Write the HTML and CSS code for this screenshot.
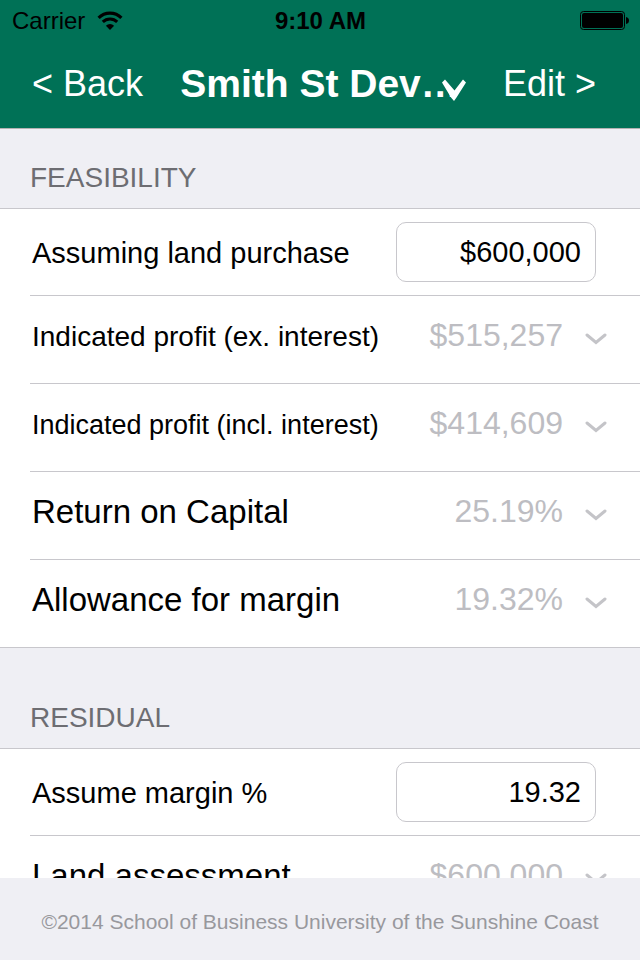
FILE: index.html
```html
<!DOCTYPE html>
<html lang="en">
<head>
    <meta charset="UTF-8">
    <meta name="viewport" content="width=device-width, initial-scale=1.0">
    <title>Smith St Development</title>
    <link rel="stylesheet" href="styles.css">
</head>
<body>
    <header class="header">
        <div class="status-bar">
            <div class="carrier">
                <span>Carrier</span>
                <svg class="wifi" width="26" height="20" viewBox="0 0 26 20">
                    <path d="M1.6 6.8 A16 16 0 0 1 24.4 6.8" fill="none" stroke="#000" stroke-width="3.2"/>
                    <path d="M5.8 10.9 A10.2 10.2 0 0 1 20.2 10.9" fill="none" stroke="#000" stroke-width="3"/>
                    <path d="M13 19 L8.9 14.8 A5.8 5.8 0 0 1 17.1 14.8 Z"/>
                </svg>
            </div>
            <span class="clock">9:10 AM</span>
            <svg class="battery" width="49" height="20" viewBox="0 0 49 20">
                <rect x="0.5" y="0.5" width="44" height="18" rx="3" fill="none" stroke="#000"/>
                <rect x="2" y="2" width="41" height="15" rx="2"/>
                <path d="M46 6 Q49 6.500 49 9.500 Q49 12.500 46 13 Z"/>
            </svg>
        </div>
        <nav class="nav-bar">
            <button type="button" class="nav-button">&lt; Back</button>
            <button type="button" class="nav-title">
                <span>Smith St Dev…</span>
                <svg class="title-arrow" width="24" height="22" viewBox="0 0 24 22">
                    <path d="M0 3.500 L3 0.500 L12.500 11.500 L21 0.500 L24 3.500 L14.500 18.500 L12 22 L9 18.500 Z" fill="#fff"/>
                </svg>
            </button>
            <button type="button" class="nav-button">Edit &gt;</button>
        </nav>
    </header>

    <main class="content">
        <section>
            <h2 class="section-title">Feasibility</h2>
            <div class="rows">
                <div class="row row-input">
                    <label class="label" for="land_purchase">Assuming land purchase</label>
                    <input type="text" id="land_purchase" name="land_purchase" value="$600,000">
                </div>
                <div class="row">
                    <span class="label label-medium">Indicated profit (ex. interest)</span>
                    <span class="value">$515,257</span>
                    <button type="button" class="expand" aria-label="Show profit excluding interest">
                        <svg width="22" height="12" viewBox="0 0 22 12"><path d="M2 2 L11 9.500 L20 2"/></svg>
                    </button>
                </div>
                <div class="row">
                    <span class="label label-small">Indicated profit (incl. interest)</span>
                    <span class="value">$414,609</span>
                    <button type="button" class="expand" aria-label="Show profit including interest">
                        <svg width="22" height="12" viewBox="0 0 22 12"><path d="M2 2 L11 9.500 L20 2"/></svg>
                    </button>
                </div>
                <div class="row">
                    <span class="label label-large">Return on Capital</span>
                    <span class="value">25.19%</span>
                    <button type="button" class="expand" aria-label="Show return on capital">
                        <svg width="22" height="12" viewBox="0 0 22 12"><path d="M2 2 L11 9.500 L20 2"/></svg>
                    </button>
                </div>
                <div class="row">
                    <span class="label label-large">Allowance for margin</span>
                    <span class="value">19.32%</span>
                    <button type="button" class="expand" aria-label="Show allowance for margin">
                        <svg width="22" height="12" viewBox="0 0 22 12"><path d="M2 2 L11 9.500 L20 2"/></svg>
                    </button>
                </div>
            </div>
        </section>

        <section>
            <h2 class="section-title section-title-next">Residual</h2>
            <div class="rows">
                <div class="row row-input">
                    <label class="label" for="margin">Assume margin %</label>
                    <input type="text" id="margin" name="margin" value="19.32">
                </div>
                <div class="row">
                    <span class="label label-large">Land assessment</span>
                    <span class="value">$600,000</span>
                    <button type="button" class="expand" aria-label="Show land assessment">
                        <svg width="22" height="12" viewBox="0 0 22 12"><path d="M2 2 L11 9.500 L20 2"/></svg>
                    </button>
                </div>
            </div>
        </section>
    </main>

    <footer class="footer">©2014 School of Business University of the Sunshine Coast</footer>
</body>
</html>
```

FILE: styles.css
```css
* {
    box-sizing: border-box;
}

body {
    margin: 0;
    height: 100vh;
    display: flex;
    flex-direction: column;
    overflow: hidden;
    font-family: "Liberation Sans", Arial, sans-serif;
    background-color: #efeff4;
    color: #000;
}

button {
    padding: 0;
    border: none;
    background: none;
    font-family: inherit;
    cursor: pointer;
}

svg {
    display: block;
}

/* Header */
.header {
    flex: none;
    background-color: #007156;
    border-bottom: 1px solid #b2b2b2;
}

.status-bar {
    display: grid;
    grid-template-columns: 1fr auto 1fr;
    align-items: center;
    height: 40px;
    padding: 2px 11px 0 12px;
    font-size: 24px;
}

.carrier {
    display: flex;
    align-items: center;
    gap: 12px;
}

.clock {
    font-weight: bold;
}

.battery {
    justify-self: end;
}

.nav-bar {
    display: flex;
    align-items: center;
    justify-content: space-between;
    height: 88px;
    padding: 0 44px 0 32px;
}

.nav-button {
    font-size: 36px;
    color: #fff;
}

.nav-title {
    position: relative;
    padding-right: 6px;
    font-size: 39px;
    font-weight: bold;
    color: #fff;
}

.title-arrow {
    position: absolute;
    right: 0;
    bottom: 5px;
}

/* Sections */
.content {
    flex: 1;
    min-height: 0;
    overflow-y: auto;
    scrollbar-width: none;
}

.section-title {
    margin: 0;
    padding: 33px 30px 14px;
    font-size: 28px;
    line-height: 32px;
    font-weight: normal;
    text-transform: uppercase;
    color: #6d6d72;
}

.section-title-next {
    padding-top: 54px;
}

.rows {
    padding-left: 30px;
    background-color: #fff;
    border-top: 1px solid #c8c7cc;
    border-bottom: 1px solid #c8c7cc;
}

.row {
    display: flex;
    align-items: center;
    height: 88px;
    padding: 0 33px 8px 2px;
    border-bottom: 1px solid #c8c7cc;
}

.row:last-child {
    height: 87px;
    border-bottom: none;
}

.row-input {
    height: 87px;
    padding: 0 44px 0 2px;
}

.label {
    flex: 1;
    padding-top: 3px;
    font-size: 29px;
}

.label-large {
    padding-top: 0;
    font-size: 33px;
}

.label-medium {
    font-size: 28px;
}

.label-small {
    font-size: 27px;
}

.row input {
    width: 200px;
    height: 60px;
    padding: 0 14px;
    font-family: inherit;
    font-size: 29px;
    text-align: right;
    color: #000;
    background-color: #fff;
    border: 1px solid #c8c7cc;
    border-radius: 10px;
}

.value {
    font-size: 32px;
    color: #bdbdc2;
}

.expand {
    margin-left: 22px;
    padding-top: 6px;
}

.expand path {
    fill: none;
    stroke: #c4c4c8;
    stroke-width: 3;
    stroke-linecap: round;
}

/* Footer */
.footer {
    flex: none;
    padding: 34px 20px 28px;
    font-size: 21px;
    line-height: 20px;
    text-align: center;
    color: #98989d;
}
```
